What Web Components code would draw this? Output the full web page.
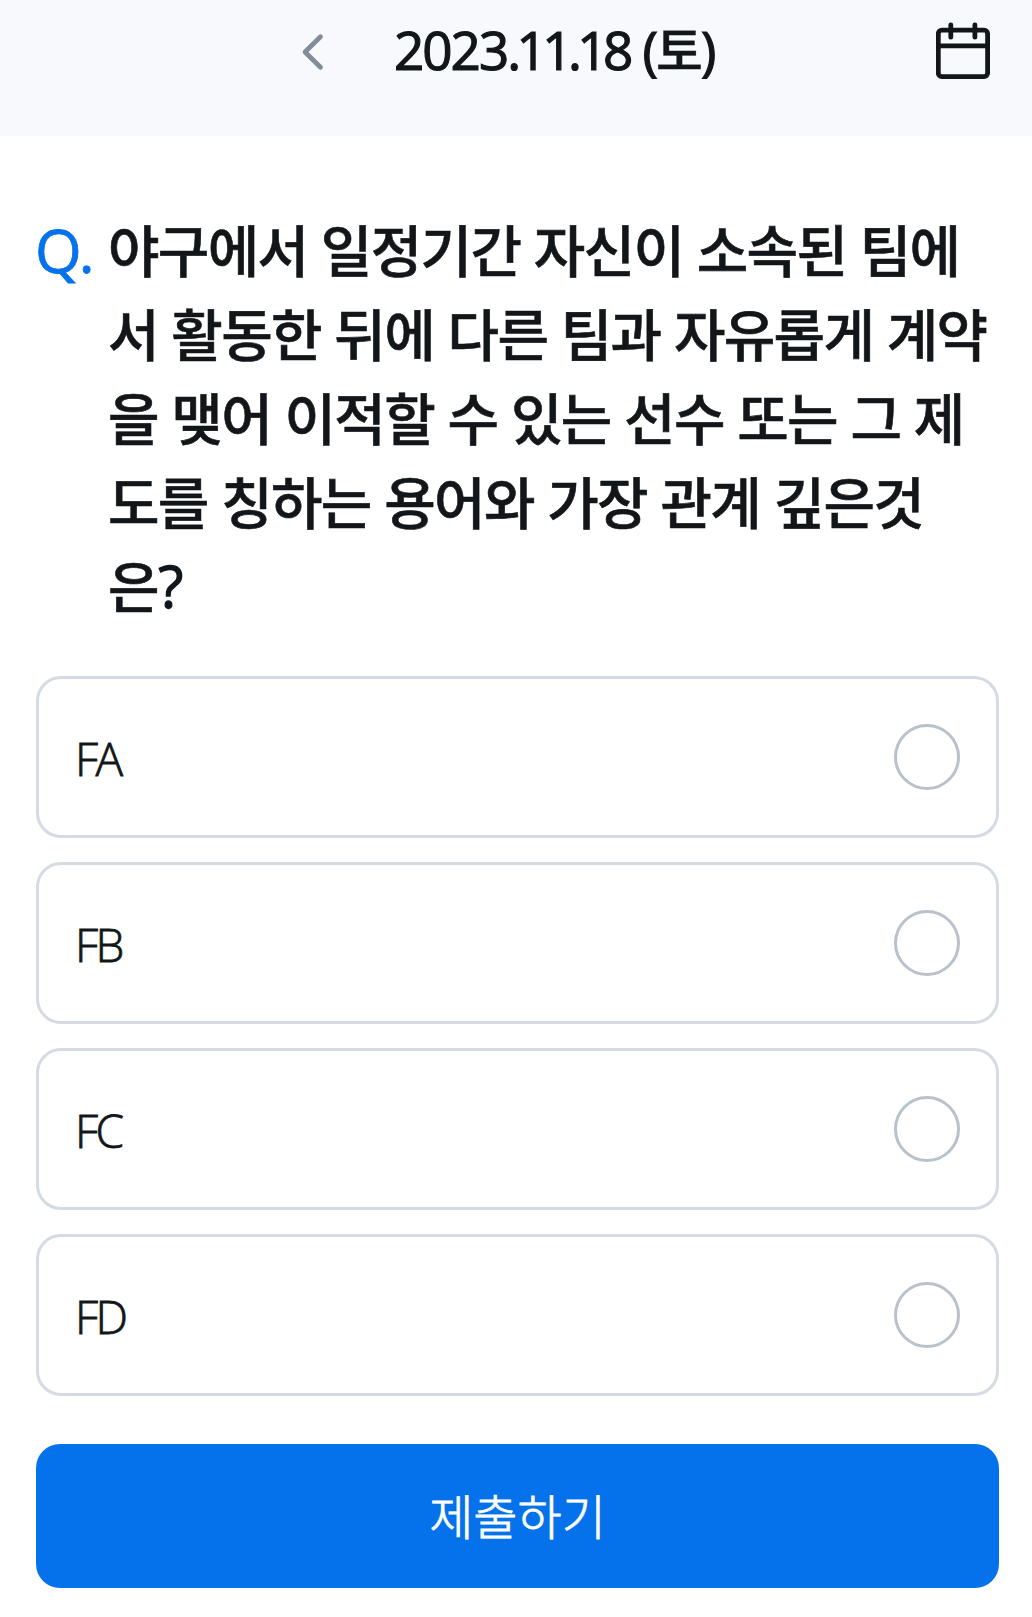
<!DOCTYPE html>
<html lang="ko">
<head>
<meta charset="utf-8">
<title>퀴즈</title>
<style>
body{margin:0;background:#fff;color:#121619;font-family:"Open Sans","Noto Sans CJK KR",sans-serif}
.day{letter-spacing:-4.6px}
.week{letter-spacing:-2.2px;margin-left:2px}
.week b{font-family:"Noto Sans CJK KR",sans-serif;font-weight:500;font-size:51px;line-height:1;-webkit-text-stroke:.4px #121619}
.mark{font-family:"Open Sans",sans-serif;font-size:58px;line-height:1;margin-left:.5px;-webkit-text-stroke:1.3px #121619}
</style>
</head>
<body>
<quiz-page>
<date-bar slot="header">2023<span class="day">.11.18</span> <span class="week">(<b>토</b>)</span></date-bar>
<quiz-question>야구에서 일정기간 자신이 소속된 팀에<br>서 활동한 뒤에 다른 팀과 자유롭게 계약<br>을 맺어 이적할 수 있는 선수 또는 그 제<br>도를 칭하는 용어와 가장 관계 깊은것<br>은<span class="mark">?</span></quiz-question>
<quiz-options>
<quiz-option>FA</quiz-option>
<quiz-option>FB</quiz-option>
<quiz-option>FC</quiz-option>
<quiz-option>FD</quiz-option>
</quiz-options>
<submit-button>제출하기</submit-button>
</quiz-page>
<script>
function define(name, html){
  customElements.define(name, class extends HTMLElement{
    constructor(){
      super();
      this.attachShadow({mode:'open'}).innerHTML = html;
    }
  });
}
define('quiz-page', `<style>
:host{display:block;min-height:1617px;box-sizing:border-box;background:#fff}
main{display:flex;flex-direction:column;padding:70px 33px 29px 36px}
</style><slot name="header"></slot><main><slot></slot></main>`);

define('date-bar', `<style>
:host{display:grid;grid-template-columns:301px 93px 1fr 96px;height:136px;background:#f8f9fd;box-sizing:border-box;align-items:start}
.prev{grid-column:2;height:104px}
.date{font-size:53px;font-weight:500;line-height:72px;letter-spacing:-2px;white-space:nowrap;padding-top:14px;-webkit-text-stroke:1.2px #121619}
svg{display:block}
</style>
<svg class="prev" width="24" height="104" viewBox="0 0 24 104" fill="none" stroke="#838d98" stroke-width="4.8" stroke-linecap="round" stroke-linejoin="round"><path d="M19.5 36.8 4 52 19.5 67.2"/></svg>
<div class="date"><slot></slot></div>
<svg width="60" height="104" viewBox="0 0 60 104" fill="none" stroke="#121619" stroke-width="4.8" stroke-linecap="round"><rect x="2.3" y="30.2" width="49.3" height="46.4" rx="3.5"/><path d="M3 45.8H51M14.8 24.8V37.2M38.9 24.8V37.2"/></svg>`);

define('quiz-question', `<style>
:host{display:flex;height:470px;line-height:84px}
.q{width:73px;margin-left:-1px;padding-top:2px;flex:none;color:#0572ec;font-size:60px;letter-spacing:-3px;-webkit-text-stroke:.8px #0572ec}
.text{font-family:"Noto Sans CJK KR",sans-serif;font-size:56px;font-weight:500;letter-spacing:-1.68px;word-spacing:-.5px;white-space:nowrap;-webkit-text-stroke:.6px #121619}
</style><div class="q">Q.</div><div class="text"><slot></slot></div>`);

define('quiz-options', `<style>
:host{display:flex;flex-direction:column;gap:24px}
</style><slot></slot>`);

define('quiz-option', `<style>
:host{display:flex;align-items:center;justify-content:space-between;height:162px;box-sizing:border-box;border:3px solid #d5dbe2;border-radius:25px;padding:0 36px}
.label{font-size:46px;font-weight:300;letter-spacing:-2.6px;line-height:60px;padding-top:2px;-webkit-text-stroke:.8px #121619}
.radio{width:66px;height:66px;box-sizing:border-box;border:3px solid #b8c2cb;border-radius:50%}
</style><span class="label"><slot></slot></span><span class="radio"></span>`);

define('submit-button', `<style>
:host{display:block;margin-top:48px}
button{display:flex;align-items:center;justify-content:center;width:100%;height:144px;border:0;padding:0 0 4px;border-radius:24px;background:#0572ec;color:#fff;font:300 48px/72px "Noto Sans CJK KR",sans-serif;-webkit-text-stroke:.8px #fff}
</style><button type="button"><slot></slot></button>`);
</script>
</body>
</html>
